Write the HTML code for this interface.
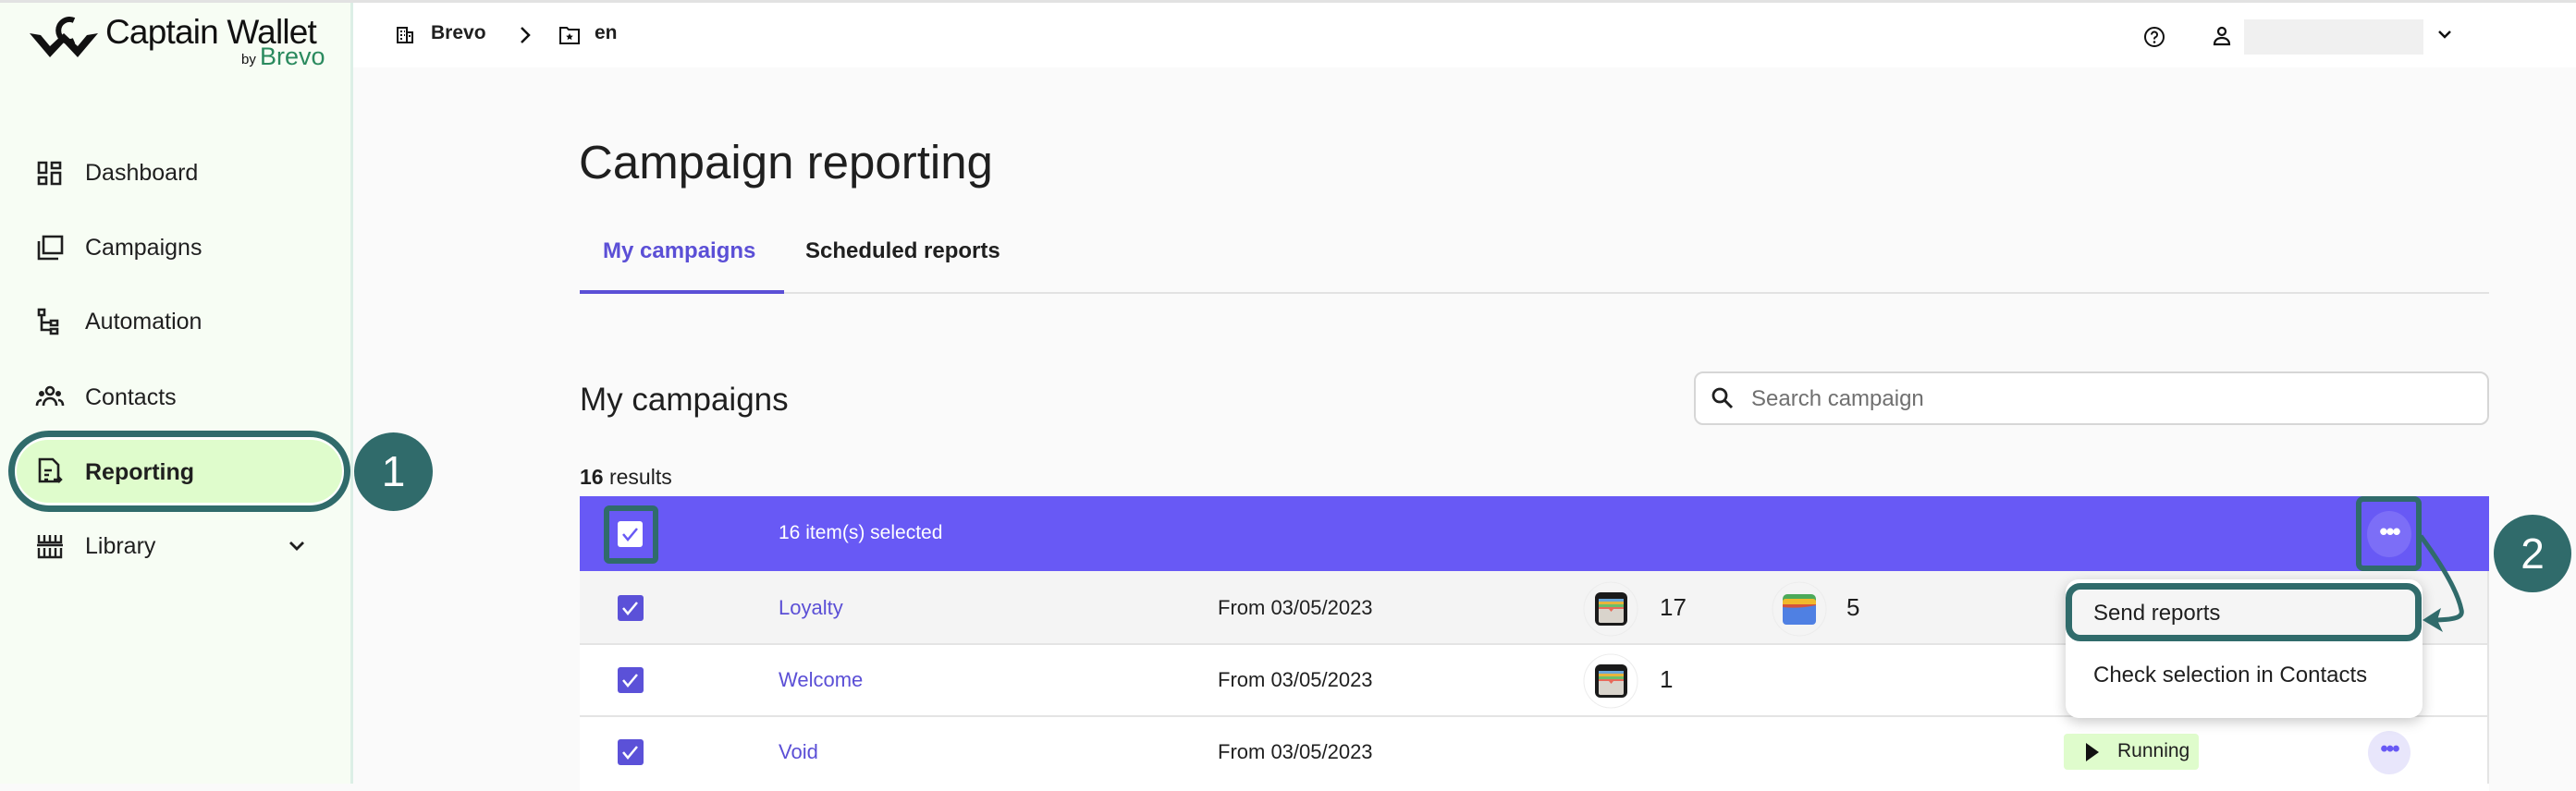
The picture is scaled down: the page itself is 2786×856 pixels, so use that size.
<!DOCTYPE html>
<html><head><meta charset="utf-8"><style>
*{box-sizing:border-box;margin:0;padding:0}
body{width:2786px;height:848px;overflow:hidden;background:#fafafa;font-family:"Liberation Sans",Arial,sans-serif;color:#1f1f1f;position:relative}
.a{position:absolute}
.side{left:0;top:0;width:382px;height:848px;background:#f7fdf4;border-right:3px solid #dcefe6}
.topbar{left:382px;top:0;width:2404px;height:73px;background:#fff}
.topline{left:0;top:0;width:2786px;height:3px;background:#e2e2e2}
.nav{left:92px;font-size:25px;color:#1f1f1f;line-height:30px}
.ic{left:38px;width:32px;height:32px}
.cb{width:28px;height:28px;background:#5b51d8;border-radius:3px}
.row{left:627px;width:2065px;height:78px;border-bottom:2px solid #e4e4e4}
.lnk{font-size:22px;color:#5b4fd6;left:842px}
.dt{font-size:22px;color:#1f1f1f;left:1317px}
</style></head><body>
<div class="a side"></div>
<div class="a topbar"></div>
<div class="a topline"></div>

<!-- logo -->
<svg class="a" style="left:30px;top:14px" width="78" height="50" viewBox="0 0 78 50">
<path d="M50 8 A12 12 0 1 0 50 30" fill="none" stroke="#111" stroke-width="6"/>
<path d="M2 22 L24 48 L39 32 L54 48 L76 22 L64 24 L54 36 L39 22 L24 36 L14 24Z" fill="#111"/>
</svg>
<div class="a" style="left:114px;top:14px;font-size:37px;color:#111;letter-spacing:-0.8px">Captain Wallet</div>
<div class="a" style="left:261px;top:56px;font-size:15px;color:#111">by</div>
<div class="a" style="left:281px;top:46px;font-size:27px;color:#2a8a5e">Brevo</div>

<!-- breadcrumb -->
<svg class="a" style="left:428px;top:28px" width="20" height="20" viewBox="0 0 20 20"><path d="M2 2h10v16H2zM12 7h6v11h-6" fill="none" stroke="#111" stroke-width="2"/><path d="M5 5h2v2H5zM5 9h2v2H5zM5 13h2v2H5zM9 5h1v2H9zM9 9h1v2H9zM14 10h2v2h-2z" fill="#111"/></svg>
<div class="a" style="left:466px;top:24px;font-size:21px;font-weight:bold">Brevo</div>
<svg class="a" style="left:560px;top:27px" width="16" height="22" viewBox="0 0 16 22"><path d="M4 3l8 8-8 8" fill="none" stroke="#111" stroke-width="2.5"/></svg>
<svg class="a" style="left:605px;top:28px" width="22" height="20" viewBox="0 0 22 20"><path d="M1 2h7l2 2h11v15H1z" fill="none" stroke="#111" stroke-width="2"/><path d="M11 8l1.2 2.5 2.6.3-2 1.8.6 2.6-2.4-1.4-2.4 1.4.6-2.6-2-1.8 2.6-.3z" fill="#111"/></svg>
<div class="a" style="left:643px;top:24px;font-size:21px;font-weight:bold">en</div>

<!-- top right -->
<svg class="a" style="left:2318px;top:28px" width="24" height="24" viewBox="0 0 24 24"><circle cx="12" cy="12" r="10" fill="none" stroke="#111" stroke-width="2"/><path d="M9 9.5a3 3 0 1 1 4 2.8c-1 .4-1 1-1 2.2" fill="none" stroke="#111" stroke-width="2"/><circle cx="12" cy="17.5" r="1.3" fill="#111"/></svg>
<svg class="a" style="left:2392px;top:27px" width="22" height="24" viewBox="0 0 22 24"><circle cx="11" cy="7" r="4" fill="none" stroke="#111" stroke-width="2.2"/><path d="M3 21c0-5 4-7 8-7s8 2 8 7z" fill="none" stroke="#111" stroke-width="2.2"/></svg>
<div class="a" style="left:2427px;top:21px;width:194px;height:38px;background:#f0f0f0"></div>
<svg class="a" style="left:2635px;top:31px" width="18" height="14" viewBox="0 0 18 14"><path d="M3 3l6 6 6-6" fill="none" stroke="#111" stroke-width="2.5"/></svg>

<!-- nav -->
<svg class="a ic" style="top:172px" viewBox="0 0 32 32"><path d="M4 4h8v11H4zM18 4h9v6h-9zM4 20h8v7H4zM18 15h9v12h-9z" fill="none" stroke="#1f1f1f" stroke-width="2.6"/></svg>
<div class="a nav" style="top:172px">Dashboard</div>
<svg class="a ic" style="top:252px" viewBox="0 0 32 32"><path d="M9 4h20v18H9z" fill="none" stroke="#1f1f1f" stroke-width="2.6"/><path d="M4 9v19h21" fill="none" stroke="#1f1f1f" stroke-width="2.6"/></svg>
<div class="a nav" style="top:253px">Campaigns</div>
<svg class="a ic" style="top:332px" viewBox="0 0 32 32"><path d="M4 3h6v6H4zM17 15h7v5h-7zM17 24h7v5h-7zM7 10v15h9M7 17h9" fill="none" stroke="#1f1f1f" stroke-width="2.6"/></svg>
<div class="a nav" style="top:333px">Automation</div>
<svg class="a ic" style="top:413px" viewBox="0 0 32 32"><circle cx="16" cy="10" r="4" fill="none" stroke="#1f1f1f" stroke-width="2.6"/><circle cx="7" cy="13" r="3" fill="#1f1f1f"/><circle cx="25" cy="13" r="3" fill="#1f1f1f"/><path d="M9 26c0-5 3-8 7-8s7 3 7 8M2 26c0-4 2-6 5-6M30 26c0-4-2-6-5-6" fill="none" stroke="#1f1f1f" stroke-width="2.6"/></svg>
<div class="a nav" style="top:415px">Contacts</div>

<!-- Reporting highlighted -->
<div class="a" style="left:9px;top:466px;width:370px;height:88px;border:7px solid #306b6b;border-radius:44px;background:#fff"></div>
<div class="a" style="left:18px;top:476px;width:352px;height:68px;border-radius:34px;background:#dffccc"></div>
<svg class="a ic" style="top:494px" viewBox="0 0 32 32"><path d="M5 3h14l6 6v18H5z" fill="none" stroke="#1f1f1f" stroke-width="2.6"/><path d="M10 15h8M10 20h5M10 25h4M20 25h8M25 22l3 3-3 3" fill="none" stroke="#1f1f1f" stroke-width="2.4"/></svg>
<div class="a nav" style="top:496px;font-weight:bold">Reporting</div>
<div class="a" style="left:383px;top:468px;width:85px;height:85px;border-radius:50%;background:#306b6b;color:#fff;font-size:46px;text-align:center;line-height:85px">1</div>

<svg class="a ic" style="top:575px" viewBox="0 0 32 32"><path d="M4 4v8h24V4M10 4v8M16 4v8M22 4v8M4 18v10h24V18M10 18v10M16 18v10M22 18v10M2 15h28" fill="none" stroke="#1f1f1f" stroke-width="2.4"/></svg>
<div class="a nav" style="top:576px">Library</div>
<svg class="a" style="left:311px;top:583px" width="20" height="16" viewBox="0 0 20 16"><path d="M3 4l7 7 7-7" fill="none" stroke="#1f1f1f" stroke-width="2.8"/></svg>

<!-- main -->
<div class="a" style="left:626px;top:146px;font-size:51px;color:#1f1f1f">Campaign reporting</div>
<div class="a" style="left:652px;top:258px;font-size:24px;font-weight:bold;color:#5b4fd6">My campaigns</div>
<div class="a" style="left:871px;top:258px;font-size:24px;font-weight:bold;color:#1f1f1f">Scheduled reports</div>
<div class="a" style="left:627px;top:316px;width:2065px;height:2px;background:#e2e2e2"></div>
<div class="a" style="left:627px;top:314px;width:221px;height:4px;background:#5b4fd6"></div>

<div class="a" style="left:627px;top:413px;font-size:35px;color:#1f1f1f">My campaigns</div>
<div class="a" style="left:1832px;top:402px;width:860px;height:58px;border:2px solid #d6d6d6;border-radius:10px;background:#fff"></div>
<svg class="a" style="left:1850px;top:418px" width="26" height="26" viewBox="0 0 26 26"><circle cx="10" cy="10" r="7" fill="none" stroke="#1f1f1f" stroke-width="2.8"/><path d="M15 15l8 8" stroke="#1f1f1f" stroke-width="3"/></svg>
<div class="a" style="left:1894px;top:418px;font-size:24px;color:#707070">Search campaign</div>

<div class="a" style="left:627px;top:503px;font-size:23px"><b>16</b> results</div>

<!-- header row -->
<div class="a" style="left:627px;top:537px;width:2065px;height:81px;background:#6859f5"></div>
<div class="a" style="left:653px;top:547px;width:59px;height:63px;border:6px solid #306b6b;border-radius:6px"></div>
<div class="a" style="left:668px;top:564px;width:27px;height:28px;background:#fff;border-radius:3px"></div>
<svg class="a" style="left:668px;top:564px" width="27" height="28" viewBox="0 0 27 28"><path d="M6 14l5 6 10-12" fill="none" stroke="#6859f5" stroke-width="2.5"/></svg>
<div class="a" style="left:842px;top:565px;font-size:21px;color:#fff">16 item(s) selected</div>
<div class="a" style="left:2548px;top:537px;width:71px;height:81px;border:6px solid #306b6b;border-radius:8px"></div>
<div class="a" style="left:2560px;top:553px;width:48px;height:50px;border-radius:50%;background:#7c6ef7"></div>
<div class="a" style="left:2560px;top:560px;width:48px;text-align:center;color:#fff;font-size:26px;font-weight:bold;letter-spacing:-2px">•••</div>

<!-- rows -->
<div class="a row" style="top:618px;background:#f4f4f4;height:80px"></div>
<div class="a row" style="top:698px;background:#fff"></div>
<div class="a row" style="top:776px;background:#fff;height:80px;border-bottom:none"></div>
<div class="a" style="left:2690px;top:618px;width:2px;height:230px;background:#e4e4e4"></div>

<div class="a cb" style="left:668px;top:644px"></div>
<div class="a cb" style="left:668px;top:722px"></div>
<div class="a cb" style="left:668px;top:800px"></div>
<svg class="a" style="left:668px;top:644px" width="28" height="190" viewBox="0 0 28 190"><path d="M6 14l5 6 10-12M6 92l5 6 10-12M6 170l5 6 10-12" fill="none" stroke="#fff" stroke-width="2.5"/></svg>

<div class="a lnk" style="top:645px">Loyalty</div>
<div class="a lnk" style="top:723px">Welcome</div>
<div class="a lnk" style="top:801px">Void</div>
<div class="a dt" style="top:645px">From 03/05/2023</div>
<div class="a dt" style="top:723px">From 03/05/2023</div>
<div class="a dt" style="top:801px">From 03/05/2023</div>

<!-- wallet icons -->
<svg class="a" style="left:1712px;top:629px" width="60" height="60" viewBox="0 0 60 60"><circle cx="30" cy="30" r="29" fill="none" stroke="#ececec"/><rect x="13" y="12" width="35" height="36" rx="6" fill="#1a1a1a"/><rect x="17" y="19" width="27" height="26" rx="2" fill="#d9d4cc"/><rect x="17" y="19" width="27" height="3" fill="#6aa6d8"/><rect x="17" y="22" width="27" height="3" fill="#e8b43c"/><rect x="17" y="25" width="27" height="3" fill="#6cbf6a"/><path d="M17 28h27v2H33l-2.5 3-2.5-3H17z" fill="#e86a5a"/></svg>
<div class="a" style="left:1795px;top:642px;font-size:26px">17</div>
<svg class="a" style="left:1916px;top:629px" width="60" height="60" viewBox="0 0 60 60"><circle cx="30" cy="30" r="29" fill="none" stroke="#ececec"/><rect x="12" y="14" width="36" height="14" rx="5" fill="#4caa5a"/><rect x="12" y="19" width="36" height="12" rx="3" fill="#f0b92c"/><path d="M12 25h36v2l-14 8-22-4z" fill="#d4533c"/><path d="M12 28 Q30 30 48 26 V43 a4 4 0 0 1-4 4H16a4 4 0 0 1-4-4z" fill="#4f80e3"/></svg>
<div class="a" style="left:1997px;top:642px;font-size:26px">5</div>
<svg class="a" style="left:1712px;top:707px" width="60" height="60" viewBox="0 0 60 60"><circle cx="30" cy="30" r="29" fill="none" stroke="#ececec"/><rect x="13" y="12" width="35" height="36" rx="6" fill="#1a1a1a"/><rect x="17" y="19" width="27" height="26" rx="2" fill="#d9d4cc"/><rect x="17" y="19" width="27" height="3" fill="#6aa6d8"/><rect x="17" y="22" width="27" height="3" fill="#e8b43c"/><rect x="17" y="25" width="27" height="3" fill="#6cbf6a"/><path d="M17 28h27v2H33l-2.5 3-2.5-3H17z" fill="#e86a5a"/></svg>
<div class="a" style="left:1795px;top:720px;font-size:26px">1</div>

<!-- running badge -->
<div class="a" style="left:2232px;top:794px;width:146px;height:39px;background:#dffccc;border-radius:4px"></div>
<svg class="a" style="left:2254px;top:802px" width="18" height="24" viewBox="0 0 18 24"><path d="M2 2l14 10-14 10z" fill="#111"/></svg>
<div class="a" style="left:2290px;top:801px;font-size:21px">Running</div>
<div class="a" style="left:2561px;top:791px;width:46px;height:47px;border-radius:50%;background:#e8e6fb"></div>
<div class="a" style="left:2561px;top:797px;width:46px;text-align:center;color:#6859f5;font-size:24px;font-weight:bold;letter-spacing:-2px">•••</div>

<!-- dropdown -->
<div class="a" style="left:2234px;top:627px;width:386px;height:150px;background:#fff;border-radius:14px;box-shadow:0 4px 14px rgba(0,0,0,.22)"></div>
<div class="a" style="left:2234px;top:631px;width:385px;height:63px;border:7px solid #306b6b;border-radius:16px;background:#f5f5f5"></div>
<div class="a" style="left:2264px;top:650px;font-size:24px">Send reports</div>
<div class="a" style="left:2264px;top:717px;font-size:24px">Check selection in Contacts</div>

<!-- arrow & circle 2 -->
<svg class="a" style="left:2600px;top:560px" width="100" height="130" viewBox="0 0 100 130">
<path d="M18 20 C40 50 58 80 62 100 C64 108 56 111 28 111" fill="none" stroke="#306b6b" stroke-width="5"/>
<path d="M20 111 L40 98 L36 111 L42 124Z" fill="#306b6b"/>
</svg>
<div class="a" style="left:2697px;top:557px;width:84px;height:84px;border-radius:50%;background:#306b6b;color:#fff;font-size:46px;text-align:center;line-height:84px">2</div>
</body></html>
